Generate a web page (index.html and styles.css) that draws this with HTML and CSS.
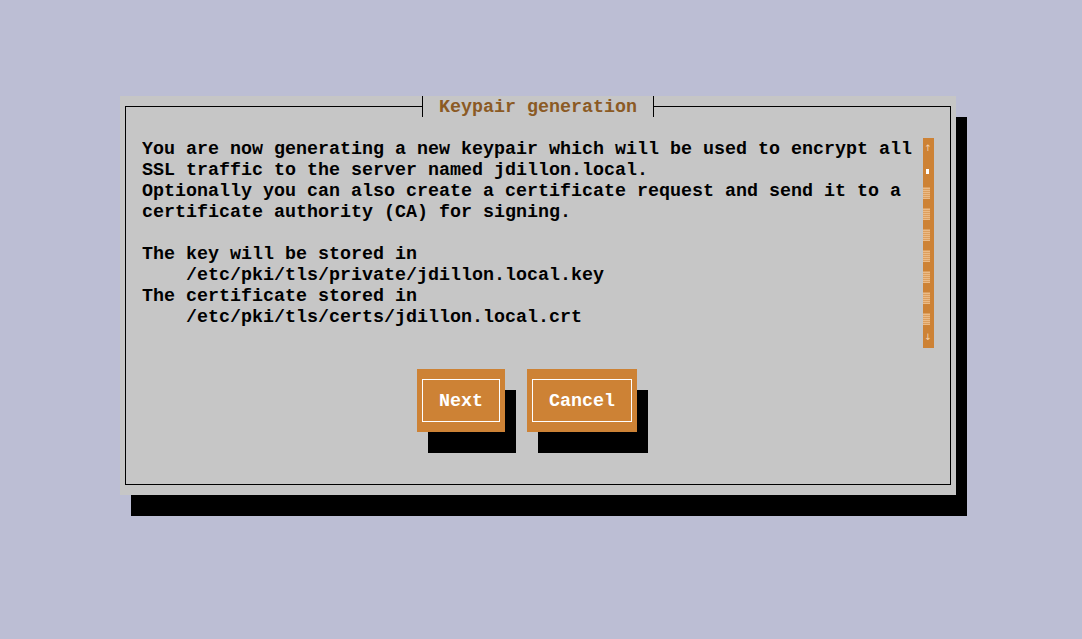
FILE: index.html
```html
<!DOCTYPE html>
<html>
<head>
<meta charset="utf-8">
<link rel="stylesheet" href="styles.css">
</head>
<body>
<div class="dialog">
  <div class="frame">
    <div class="content">
      <div class="textarea">
        <pre class="text">You are now generating a new keypair which will be used to encrypt all
SSL traffic to the server named jdillon.local.
Optionally you can also create a certificate request and send it to a
certificate authority (CA) for signing.

The key will be stored in
    /etc/pki/tls/private/jdillon.local.key
The certificate stored in
    /etc/pki/tls/certs/jdillon.local.crt
</pre>
        <div class="scrollbar">
          <div class="sb-cell"><span class="arrow">↑</span></div>
          <div class="sb-cell"><span class="thumb"></span></div>
          <div class="sb-cell"><span class="hatch"></span></div>
          <div class="sb-cell"><span class="hatch"></span></div>
          <div class="sb-cell"><span class="hatch"></span></div>
          <div class="sb-cell"><span class="hatch"></span></div>
          <div class="sb-cell"><span class="hatch"></span></div>
          <div class="sb-cell"><span class="hatch"></span></div>
          <div class="sb-cell"><span class="hatch"></span></div>
          <div class="sb-cell"><span class="arrow">↓</span></div>
        </div>
      </div>
      <div class="buttons">
        <div class="button next"><div class="button-inner">Next</div></div>
        <div class="button cancel"><div class="button-inner">Cancel</div></div>
      </div>
    </div>
  </div>
  <div class="title">Keypair generation</div>
</div>
</body>
</html>
```
FILE: styles.css
```css
html, body {
  margin: 0;
  padding: 0;
}
body {
  background: #bcbed4;
  width: 1082px;
  height: 639px;
  overflow: hidden;
  padding: 96px 0 0 120px;
  box-sizing: border-box;
  font-family: "Liberation Mono", "DejaVu Sans Mono", monospace;
  font-weight: bold;
  font-size: 18.33px;
}
.dialog {
  position: relative;
  width: 836px;
  height: 399px;
  background: #c6c6c6;
  box-shadow: 11px 21px 0 #000;
  padding: 10px 5px;
  box-sizing: border-box;
}
.frame {
  height: 379px;
  border: 1px solid #000;
  box-sizing: border-box;
}
.title {
  position: absolute;
  left: 302px;
  top: 0;
  height: 21px;
  width: 232px;
  overflow: hidden;
  box-sizing: border-box;
  border-left: 1px solid #000;
  border-right: 1px solid #000;
  background: #c6c6c6;
  color: #8b5a24;
  line-height: 23px;
  padding-left: 16px;
  white-space: pre;
}
.content {
  padding: 31px 0 0 16px;
  display: flex;
  flex-direction: column;
}
.textarea {
  display: flex;
  height: 210px;
}
.text {
  margin: 0;
  width: 781px;
  height: 210px;
  padding-top: 1px;
  box-sizing: border-box;
  overflow: hidden;
  font: inherit;
  line-height: 21px;
  color: #000;
}
.scrollbar {
  width: 11px;
  height: 210px;
  background: #cd8235;
  display: flex;
  flex-direction: column;
}
.sb-cell {
  height: 21px;
  display: flex;
  justify-content: center;
}
.arrow {
  font-family: "DejaVu Sans", sans-serif;
  font-weight: normal;
  font-size: 9px;
  line-height: 21px;
  color: #f3d3b0;
  margin-left: -1px;
}
.thumb {
  width: 3px;
  height: 5px;
  background: #fff;
  margin-top: 10px;
  margin-left: -2px;
}
.hatch {
  width: 7px;
  height: 12px;
  margin-top: 7px;
  margin-left: -4px;
  background:
    repeating-linear-gradient(0deg, rgba(255, 225, 190, 0.6) 0 1px, rgba(255, 225, 190, 0.3) 1px 2px);
}
.buttons {
  display: flex;
  gap: 22px;
  margin-top: 21px;
  margin-left: 275px;
}
.button {
  height: 63px;
  background: #cd8235;
  box-shadow: 11px 21px 0 #000;
  padding: 10px 5px;
  box-sizing: border-box;
}
.next { width: 88px; }
.cancel { width: 110px; }
.button-inner {
  height: 43px;
  border: 1px solid #fff;
  box-sizing: border-box;
  color: #fff;
  padding-top: 11px;
  text-align: center;
  line-height: 21px;
}
```
